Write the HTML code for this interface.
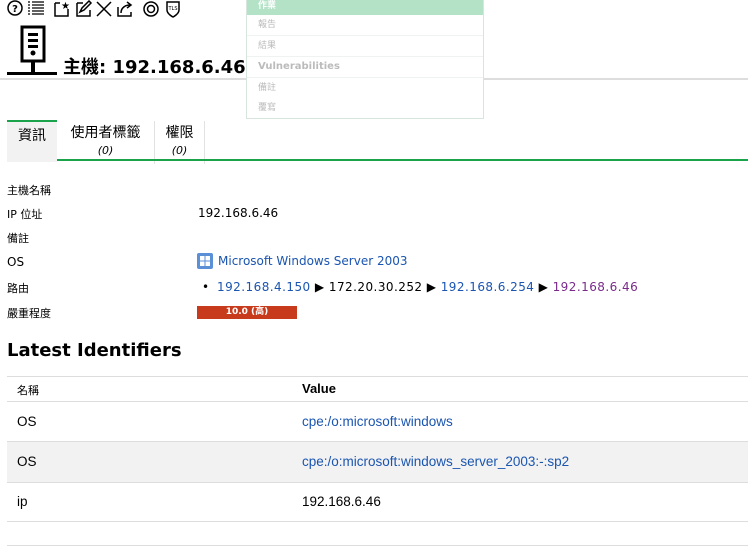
<!DOCTYPE html>
<html><head><meta charset="utf-8"><style>
body{margin:0;width:748px;height:558px;overflow:hidden;background:#fff;font-family:"DejaVu Sans","Noto Sans CJK TC",sans-serif;font-size:11px;color:#000;position:relative}
.a{position:absolute}
a{color:#1a55b0;text-decoration:none}
.lbl{position:absolute;left:7px;font-size:11px}
.val{position:absolute;left:198px}
.t{font-family:'Liberation Sans',sans-serif;font-size:13.5px}
</style></head><body>
<svg class="a" style="left:6px;top:0" width="180" height="20" fill="none" stroke="#000" stroke-width="1.5">
<circle cx="9" cy="8" r="7"/><text x="9" y="12" font-size="10" text-anchor="middle" fill="#000" stroke="none" font-family="DejaVu Sans" font-weight="bold">?</text>
<path d="M22 2h2M22 5h2M22 8h2M22 11h2M22 14h2M26 2h12M26 5h12M26 8h12M26 11h12M26 14h12" stroke-width="1.2"/>
<path d="M49 3h5M49 3v13h13v-7"/><text x="55" y="9" font-size="10" fill="#000" stroke="none">★</text>
<path d="M71 3h6M71 3v13h13v-6M74 12l2-4 7-7 2 2-7 7z"/>
<path d="M91 2l14 14M105 2l-14 14"/>
<path d="M112 7v9h13v-4M115 13c0-5 4-8 9-8M121 2l4 3-4 3"/>
<circle cx="145" cy="9" r="7"/><circle cx="145" cy="9" r="3.5"/>
<path d="M161 2h12v8c0 4-6 7-6 7s-6-3-6-7z"/><text x="167" y="10" font-size="5" text-anchor="middle" fill="#000" stroke="none">TLS</text>
</svg>
<svg class="a" style="left:7px;top:25px" width="52" height="52">
<rect x="15" y="2" width="22" height="34" fill="none" stroke="#000" stroke-width="3"/>
<rect x="21" y="8" width="10" height="3"/><rect x="21" y="14" width="10" height="3"/><rect x="21" y="20" width="10" height="3"/>
<circle cx="26" cy="28" r="2.5"/><rect x="24" y="36" width="4" height="11"/><rect x="0" y="47" width="50" height="3"/>
</svg>
<div class="a" style="left:63px;top:53px;font-size:18px;font-weight:bold">主機: 192.168.6.46</div>
<div class="a" style="left:0;top:78px;width:748px;height:2px;background:#ddd"></div>
<div class="a" style="left:246px;top:-2px;width:236px;height:119px;background:#fff;border:1px solid #d8e4de;font-size:9px;color:#bbb">
<div style="background:#b3e2c6;color:#fff;height:16px;line-height:14px;padding-left:11px;font-weight:bold">作業</div>
<div style="height:20px;line-height:20px;padding-left:11px;border-bottom:1px solid #eef2f0">報告</div>
<div style="height:20px;line-height:20px;padding-left:11px;border-bottom:1px solid #eef2f0">結果</div>
<div style="height:20px;line-height:20px;padding-left:11px;border-bottom:1px solid #eef2f0;font-weight:bold;font-size:10px">Vulnerabilities</div>
<div style="height:20px;line-height:20px;padding-left:11px">備註</div>
<div style="height:20px;line-height:20px;padding-left:11px">覆寫</div>
</div>
<div class="a" style="left:7px;top:120px;width:50px;height:40px;background:#f2f2f2;border-top:2px solid #1aa34a;font-size:14px;text-align:center;line-height:28px">資訊</div>
<div class="a" style="left:57px;top:121px;width:97px;height:39px;border-right:1px solid #e2e2e2;font-size:14px;text-align:center;line-height:17px;padding-top:4px">使用者標籤<br><i style="font-size:11px">(0)</i></div>
<div class="a" style="left:155px;top:121px;width:49px;height:39px;border-right:1px solid #e2e2e2;font-size:14px;text-align:center;line-height:17px;padding-top:4px">權限<br><i style="font-size:11px">(0)</i></div>
<div class="a" style="left:57px;top:159px;width:691px;height:2px;background:#1aa34a"></div>
<div class="lbl" style="top:182px">主機名稱</div>
<div class="lbl" style="top:206px">IP 位址</div><div class="val" style="top:206px;font-size:12px">192.168.6.46</div>
<div class="lbl" style="top:230px">備註</div>
<div class="lbl" style="top:255px;font-size:12px">OS</div>
<svg class="a" style="left:197px;top:253px" width="16" height="16"><rect width="16" height="16" rx="2" fill="#5b8fd6"/><rect x="3" y="3" width="4.5" height="4.5" fill="#fff"/><rect x="8.5" y="3" width="4.5" height="4.5" fill="#fff"/><rect x="3" y="8.5" width="4.5" height="4.5" fill="#fff"/><rect x="8.5" y="8.5" width="4.5" height="4.5" fill="#fff"/></svg>
<div class="val" style="left:218px;top:254px;font-size:12px"><a>Microsoft Windows Server 2003</a></div>
<div class="lbl" style="top:280px">路由</div>
<div class="a" style="left:202px;top:280px;font-size:12px">•</div>
<div class="val" style="left:217px;top:280px;font-size:12px;letter-spacing:0.45px"><a>192.168.4.150</a> ▶ 172.20.30.252 ▶ <a>192.168.6.254</a> ▶ <a style="color:#7a2a8a">192.168.6.46</a></div>
<div class="lbl" style="top:305px">嚴重程度</div>
<div class="a" style="left:197px;top:306px;width:100px;height:13px;background:#c83a1c;color:#fff;font-size:9px;font-weight:bold;text-align:center;line-height:13px">10.0 (高)</div>
<div class="a" style="left:7px;top:340px;font-size:18px;font-weight:bold">Latest Identifiers</div>
<div class="a" style="left:7px;top:376px;width:741px;height:1px;background:#ddd"></div>
<div class="a" style="left:17px;top:382px;font-size:11px">名稱</div>
<div class="a" style="left:302px;top:381px;font-weight:bold;font-family:'Liberation Sans',sans-serif;font-size:13px">Value</div>
<div class="a" style="left:7px;top:401px;width:741px;height:1px;background:#ddd"></div>
<div class="a t" style="left:17px;top:414px">OS</div>
<div class="a t" style="left:302px;top:414px"><a>cpe:/o:microsoft:windows</a></div>
<div class="a" style="left:7px;top:441px;width:741px;height:40px;background:#f2f2f2;border-top:1px solid #ddd;border-bottom:1px solid #ddd"></div>
<div class="a t" style="left:17px;top:454px">OS</div>
<div class="a t" style="left:302px;top:454px"><a>cpe:/o:microsoft:windows_server_2003:-:sp2</a></div>
<div class="a t" style="left:17px;top:494px">ip</div>
<div class="a t" style="left:302px;top:494px">192.168.6.46</div>
<div class="a" style="left:7px;top:521px;width:741px;height:1px;background:#ddd"></div>
<div class="a" style="left:7px;top:545px;width:741px;height:1px;background:#ddd"></div>
</body></html>
